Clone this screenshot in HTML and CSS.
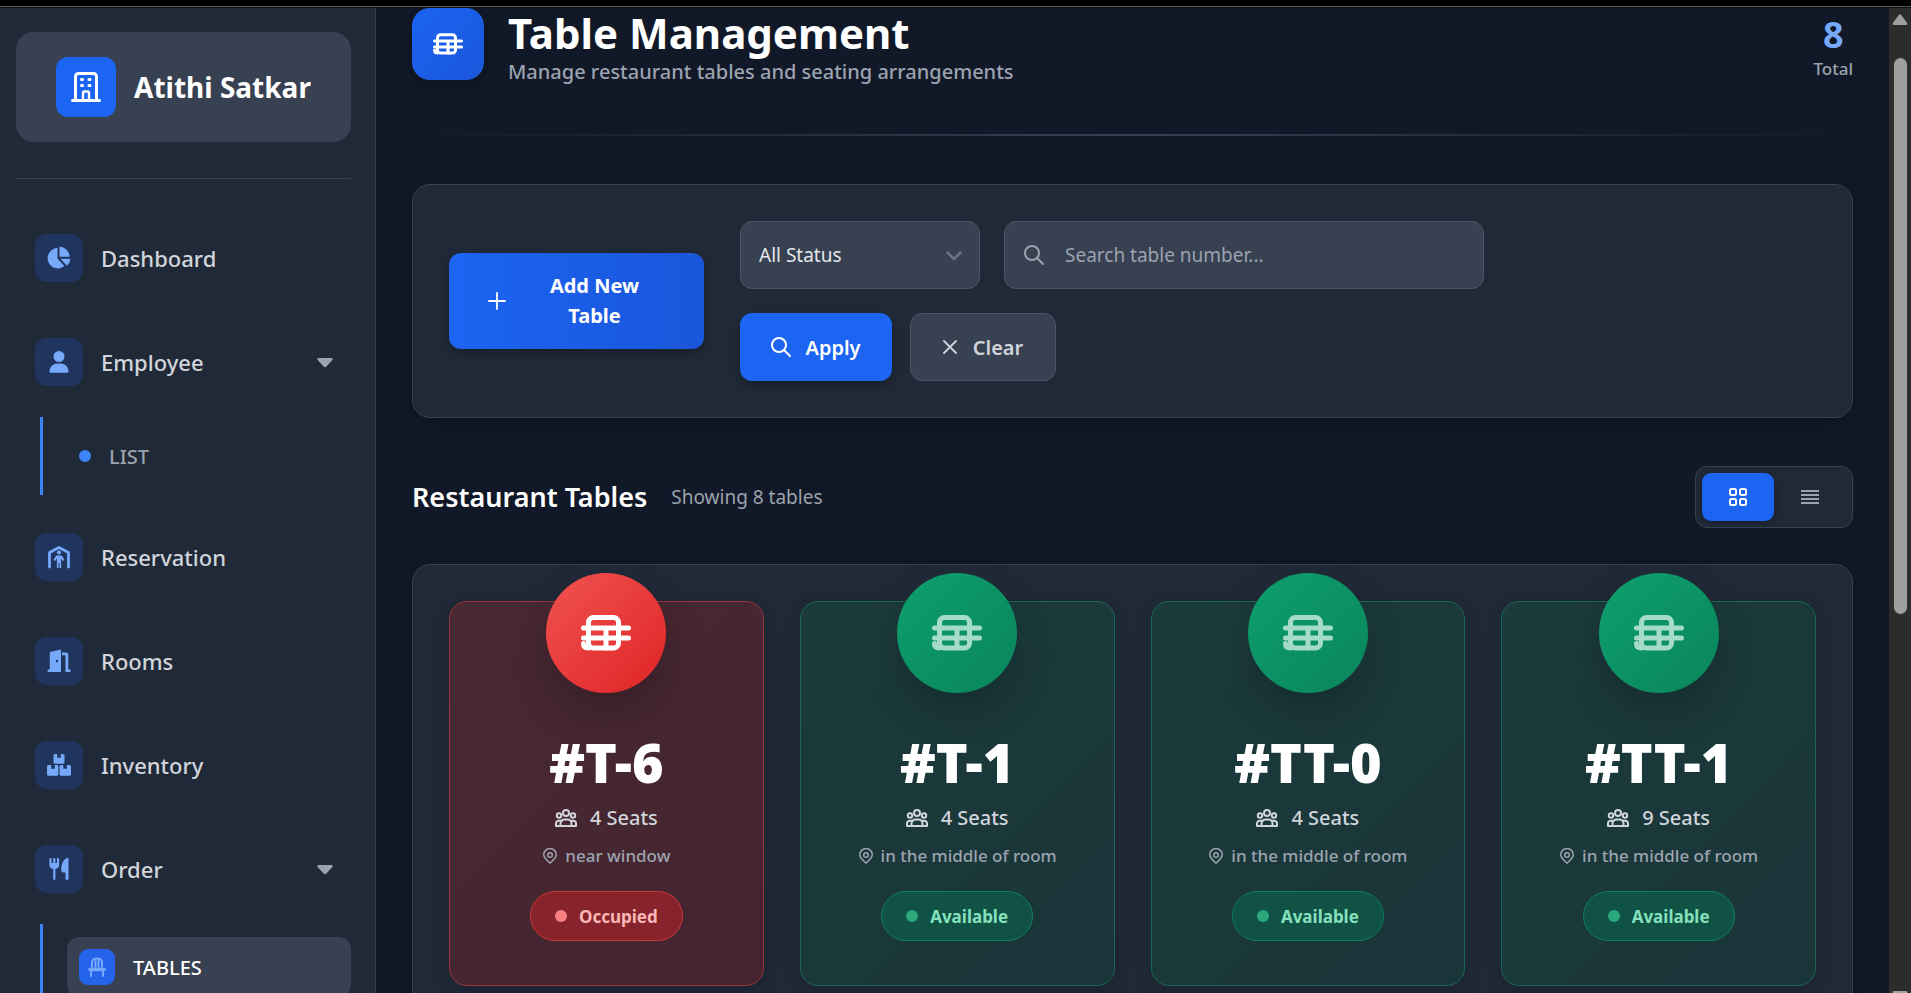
FILE: index.html
```html
<!DOCTYPE html>
<html lang="en">
<head>
<meta charset="utf-8">
<title>Table Management - Atithi Satkar</title>
<link rel="stylesheet" href="styles.css">
</head>
<body>
<svg class="sprite" aria-hidden="true">
  <symbol id="i-table" viewBox="0 0 50 50"><g fill="none" stroke="currentColor" stroke-width="5" stroke-linecap="round" stroke-linejoin="round"><rect x="7.500" y="9.500" width="30" height="30.500" rx="5"/><path d="M2.500 20h45M2.500 30h45M25 20v20M2.500 35.500q0 4.500 5 4.500"/></g></symbol>
  <symbol id="i-people" viewBox="0 0 22 20"><g fill="none" stroke="currentColor" stroke-width="2" stroke-linejoin="round"><circle cx="11" cy="5" r="3"/><circle cx="4" cy="7.500" r="2.200"/><circle cx="18" cy="7.500" r="2.200"/><path d="M5.500 18v-2.500a4 4 0 0 1 4-4h3a4 4 0 0 1 4 4V18zM5.500 18H1v-2.600a2.700 2.700 0 0 1 2.700-2.700h2.500M16.500 18H21v-2.600a2.700 2.700 0 0 0-2.700-2.700h-2.500"/></g></symbol>
  <symbol id="i-pin" viewBox="0 0 16 16"><g fill="none" stroke="currentColor" stroke-width="1.500"><path d="M8 15.200C5 12.500 1.700 9.700 1.700 6.800a6.300 6.300 0 0 1 12.600 0c0 2.900-3.300 5.700-6.300 8.400z"/><circle cx="8" cy="7" r="2.300"/></g></symbol>
  <symbol id="i-search" viewBox="0 0 20 20"><g fill="none" stroke="currentColor" stroke-width="2" stroke-linecap="round"><circle cx="8" cy="8" r="7"/><path d="M13 13l6 6"/></g></symbol>
  <symbol id="i-caret" viewBox="0 -2 16 12"><path fill="currentColor" d="M1.500 0h13q2 .6.900 2L9.400 8.500q-1.400 1.400-2.800 0L.6 2Q-.4.600 1.500 0z"/></symbol>
</svg>
<div class="window-edge"></div>
<div class="app">
  <aside class="sidebar">
    <a class="brand" href="#">
      <span class="brand-icon"><svg width="30" height="30" viewBox="0 0 30 30" fill="none" stroke="#fff" stroke-width="3" stroke-linecap="round"><path d="M1.500 28.500h27M4.500 28V4.500a3 3 0 0 1 3-3h15a3 3 0 0 1 3 3V28"/><path d="M12 28v-7a1.500 1.500 0 0 1 1.500-1.500h3A1.500 1.500 0 0 1 18 21v7" stroke-width="2.400"/><path d="M10.500 7.500h1M18 7.500h1M10.500 13.500h1M18 13.500h1"/></svg></span>
      <span class="brand-name">Atithi Satkar</span>
    </a>
    <nav>
      <ul class="menu">
        <li><a class="menu-item" href="#"><span class="menu-icon"><svg width="24" height="24" viewBox="0 0 24 24" fill="currentColor"><path d="M10.500 2v10.500l6.800 7.600A10.200 10.200 0 1 1 10.500 2z"/><path d="M12.500.8a10 10 0 0 1 10 10h-10zM13.500 12.800h10a11 11 0 0 1-3.600 7z"/></svg></span>Dashboard</a></li>
        <li><button class="menu-item" type="button"><span class="menu-icon"><svg width="24" height="24" viewBox="0 0 24 24" fill="currentColor"><circle cx="12" cy="6.500" r="5.500"/><path d="M2.500 21.500c0-4.800 3.800-8 8-8h3c4.200 0 8 3.200 8 8q0 1.200-1.200 1.200H3.700q-1.200 0-1.200-1.200z"/></svg></span>Employee<svg class="caret" width="16" height="12"><use href="#i-caret"/></svg></button>
          <ul class="submenu"><li><a class="sub-item" href="#"><span class="bullet"></span>LIST</a></li></ul></li>
        <li><a class="menu-item" href="#"><span class="menu-icon"><svg width="24" height="24" viewBox="0 0 24 24" fill="currentColor"><path d="M2.500 22V7.500L12 2.500l9.500 5V22" fill="none" stroke="currentColor" stroke-width="2.800" stroke-linejoin="round" stroke-linecap="round"/><circle cx="12" cy="7.500" r="2.100"/><path d="M10 10.500h4q1.500 0 3.300 4.600l-1.400.9-1.800-2.400V23h-1.600v-5h-1v5H9.900v-9.400L8.100 16l-1.400-.9q1.800-4.600 3.300-4.600z"/></svg></span>Reservation</a></li>
        <li><a class="menu-item" href="#"><span class="menu-icon"><svg width="24" height="24" viewBox="0 0 24 24" fill="currentColor"><path d="M2.800 20.500V4.200q0-1.200 1.200-1.500l8.300-1.900q1.700-.3 1.700 1.300V23H1q-1.200-1.200 0-2.500z"/><circle cx="10" cy="12" r="1.200" fill="#20355d"/><path d="M15 3.500h4q2.300 0 2.300 2.300v14.700H23q1.500 1.300 0 2.500h-4.500V6.200H15z"/></svg></span>Rooms</a></li>
        <li><a class="menu-item" href="#"><span class="menu-icon"><svg width="24" height="24" viewBox="0 0 24 24" fill="currentColor"><path d="M8 1h2.200v4q1.800-1 3.600 0V1H16q1.500 0 1.500 1.500v6.700q0 1.500-1.500 1.500H8q-1.500 0-1.500-1.500V2.500Q6.500 1 8 1zM1.500 12h2.700v4q1.800-1 3.600 0v-4h2.300q1.300 0 1.300 1.500v7.700q0 1.500-1.500 1.500H1.500Q0 22.700 0 21.200v-7.700Q0 12 1.500 12zM14 12h2.300v4q1.800-1 3.600 0v-4h2.600q1.500 0 1.500 1.500v7.700q0 1.500-1.500 1.500h-8.400q-1.500 0-1.500-1.500v-7.700Q12.600 12 14 12z"/></svg></span>Inventory</a></li>
        <li><button class="menu-item" type="button"><span class="menu-icon"><svg width="24" height="24" viewBox="0 0 24 24"><path d="M3.500 2v6q0 3 3.800 3T11 8V2M7.300 2v20" fill="none" stroke="currentColor" stroke-width="2.200" stroke-linecap="round"/><path fill="currentColor" d="M4 6h6.500v3l-1 2H5l-1-2zM21.500 1.500V22q-1.500 1.800-3 0v-6.500h-2q-2.300 0-2.300-2.500C14.200 7 16 3 19.500 1.200q2-.8 2 .3z"/></svg></span>Order<svg class="caret" width="16" height="12"><use href="#i-caret"/></svg></button>
          <ul class="submenu"><li><a class="sub-item current" href="#"><span class="sub-icon"><svg width="18" height="20" viewBox="0 0 18 20" fill="none" stroke="#76a9fa" stroke-width="2" stroke-linecap="round"><path d="M4 10V5.500Q4 1.500 9 1.500t5 4V10M7.500 2.500V10M10.500 2.500V10M3 19v-5M15 19v-5"/><path d="M2 12.500h14" stroke-width="3.500"/></svg></span>TABLES</a></li></ul></li>
      </ul>
    </nav>
  </aside>
  <main class="main">
    <header class="page-head">
      <span class="page-icon"><svg width="30" height="30"><use href="#i-table"/></svg></span>
      <div class="page-title"><h1>Table Management</h1><p>Manage restaurant tables and seating arrangements</p></div>
      <div class="total"><strong>8</strong><span>Total</span></div>
    </header>
    <section class="panel filters">
      <button class="btn add" type="button"><svg width="18" height="18" viewBox="0 0 18 18" stroke="currentColor" stroke-width="1.800" stroke-linecap="round"><path d="M9 1v16M1 9h16"/></svg><span>Add New Table</span></button>
      <form class="filter-form">
        <div class="select-wrap"><select class="field" aria-label="Status"><option>All Status</option></select><svg class="chevron" width="16" height="10" viewBox="0 0 16 10" fill="none" stroke="#6b7280" stroke-width="2.500" stroke-linecap="round" stroke-linejoin="round"><path d="M1.500 1.500L8 8l6.500-6.500"/></svg></div>
        <div class="search-wrap"><svg class="search-icon" width="20" height="20"><use href="#i-search"/></svg><input class="field" type="text" aria-label="Search table number" placeholder="Search table number..."></div>
        <div class="actions">
          <button class="btn apply" type="button"><svg width="20" height="20"><use href="#i-search"/></svg>Apply</button>
          <button class="btn clear" type="button"><svg width="14" height="14" viewBox="0 0 14 14" stroke="currentColor" stroke-width="1.800" stroke-linecap="round"><path d="M1 1l12 12M13 1L1 13"/></svg>Clear</button>
        </div>
      </form>
    </section>
    <div class="list-head">
      <h2>Restaurant Tables</h2><span class="count">Showing 8 tables</span>
      <div class="view-toggle">
        <button class="view on" type="button" aria-label="Grid view"><svg width="18" height="18" viewBox="0 0 18 18" fill="none" stroke="currentColor" stroke-width="2"><rect x="1" y="1" width="6" height="6" rx="1.500"/><rect x="11" y="1" width="6" height="6" rx="1.500"/><rect x="1" y="11" width="6" height="6" rx="1.500"/><rect x="11" y="11" width="6" height="6" rx="1.500"/></svg></button>
        <button class="view" type="button" aria-label="List view"><svg width="18" height="14" viewBox="0 0 18 14" stroke="currentColor" stroke-width="2"><path d="M0 1h18M0 5h18M0 9h18M0 13h18"/></svg></button>
      </div>
    </div>
    <section class="panel cards">
      <article class="card busy"><span class="medal"><svg width="50" height="50"><use href="#i-table"/></svg></span><h3>#T-6</h3><p class="seats"><svg width="22" height="20"><use href="#i-people"/></svg>4 Seats</p><p class="place"><svg width="16" height="16"><use href="#i-pin"/></svg>near window</p><span class="badge">Occupied</span></article>
      <article class="card"><span class="medal"><svg width="50" height="50"><use href="#i-table"/></svg></span><h3>#T-1</h3><p class="seats"><svg width="22" height="20"><use href="#i-people"/></svg>4 Seats</p><p class="place"><svg width="16" height="16"><use href="#i-pin"/></svg>in the middle of room</p><span class="badge">Available</span></article>
      <article class="card"><span class="medal"><svg width="50" height="50"><use href="#i-table"/></svg></span><h3>#TT-0</h3><p class="seats"><svg width="22" height="20"><use href="#i-people"/></svg>4 Seats</p><p class="place"><svg width="16" height="16"><use href="#i-pin"/></svg>in the middle of room</p><span class="badge">Available</span></article>
      <article class="card"><span class="medal"><svg width="50" height="50"><use href="#i-table"/></svg></span><h3>#TT-1</h3><p class="seats"><svg width="22" height="20"><use href="#i-people"/></svg>9 Seats</p><p class="place"><svg width="16" height="16"><use href="#i-pin"/></svg>in the middle of room</p><span class="badge">Available</span></article>
    </section>
  </main>
  <div class="scrollbar" aria-hidden="true"><svg width="16" height="12" viewBox="0 0 16 12"><path fill="#9f9f9f" d="M6.800 1q1.200-1.400 2.400 0l6 8q.8 2-1 2H1.800q-1.800 0-1-2z"/></svg><span class="thumb"></span><svg class="down" width="16" height="12" viewBox="0 0 16 12"><path fill="#9f9f9f" d="M6.800 11q1.200 1.400 2.400 0l6-8q.8-2-1-2H1.800q-1.800 0-1 2z"/></svg></div>
</div>
</body>
</html>
```
FILE: styles.css
```css
* { box-sizing: border-box; }
html, body { height: 100%; }
body {
  margin: 0;
  display: flex;
  flex-direction: column;
  overflow: hidden;
  background: #111827;
  color: #fff;
  font-family: "Segoe UI", "Noto Sans", "Open Sans", sans-serif;
  font-size: 19px;
}
h1, h2, h3, p, ul { margin: 0; padding: 0; }
ul { list-style: none; }
a { color: inherit; text-decoration: none; }
button, input, select { font: inherit; color: inherit; }
button { cursor: pointer; border: 0; }
svg { flex: none; display: block; }
.sprite { position: absolute; width: 0; height: 0; }

.window-edge { flex: none; height: 8px; background: #000; border-bottom: 1px solid #0b0e14; box-shadow: inset 0 -1px #555; }
.app { flex: 1; min-height: 0; display: flex; }

/* Sidebar */
.sidebar { flex: none; width: 376px; padding: 24px 24px 0 16px; overflow: hidden; background: #202937; border-right: 1px solid #374151; }
.brand { display: flex; align-items: center; gap: 18px; height: 110px; padding: 0 40px; border-radius: 18px; background: #374151; }
.brand-icon { display: grid; place-items: center; width: 60px; height: 60px; border-radius: 12px; background: #1c64f2; }
.brand-name { font-size: 28px; font-weight: 700; white-space: nowrap; }
nav { margin-top: 36px; padding-top: 37px; border-top: 1px solid #374151; }
.menu { display: flex; flex-direction: column; gap: 20px; }
.menu-item { display: flex; align-items: center; gap: 18px; width: 100%; height: 84px; padding: 0 18px 0 19px; background: none; text-align: left; color: #d1d5db; font-size: 22px; font-weight: 500; }
.menu-icon { display: grid; place-items: center; width: 48px; height: 48px; border-radius: 12px; background: #20355d; color: #76a9fa; }
.caret { margin-left: auto; color: #9ca3af; }
.submenu { margin: 13px 0 0 24px; padding: 13px 0 13px 24px; border-left: 3px solid #3f83f8; }
.sub-item { display: flex; align-items: center; gap: 18px; height: 52px; padding: 0 12px; border-radius: 12px; color: #9ca3af; font-size: 20px; font-weight: 500; }
.sub-item.current { height: 60px; background: #374151; color: #fff; }
.bullet { width: 12px; height: 12px; border-radius: 50%; background: #3f83f8; }
.sub-icon { display: grid; place-items: center; width: 36px; height: 36px; border-radius: 9px; background: #2563eb; }

/* Main column */
.main { flex: 1; min-width: 0; padding: 0 36px; overflow: hidden; background: #111827; }
.page-head { display: flex; gap: 24px; height: 128px; border-bottom: 2px solid; border-image: linear-gradient(90deg, transparent, #374151, transparent) 1; }
.page-icon { display: grid; place-items: center; flex: none; width: 72px; height: 72px; border-radius: 18px; background: linear-gradient(135deg, #1c64f2, #1a56db); box-shadow: 0 6px 18px rgba(0, 0, 0, .25); }
h1 { font-size: 42px; line-height: 50px; font-weight: 700; }
.page-title p { color: #9ca3af; font-size: 20px; line-height: 28px; font-weight: 500; }
.total { margin-left: auto; text-align: center; color: #9ca3af; font-size: 17px; line-height: 26px; font-weight: 500; }
.total strong { display: block; padding-top: 6px; color: #76a9fa; font-size: 36px; line-height: 42px; font-weight: 700; }

.panel { border: 1px solid #374151; border-radius: 18px; background: #202937; box-shadow: 0 6px 18px rgba(0, 0, 0, .2); }
.filters { display: flex; align-items: center; gap: 36px; margin-top: 48px; padding: 36px; }
.btn { display: flex; align-items: center; justify-content: center; height: 68px; border-radius: 12px; font-size: 20px; font-weight: 600; }
.btn.add { flex: none; width: 255px; height: 96px; padding: 0 33px 0 39px; justify-content: flex-start; background: linear-gradient(90deg, #1c64f2, #1a56db); line-height: 30px; font-weight: 700; box-shadow: 0 4px 10px rgba(0, 0, 0, .25); }
.btn.add span { flex: 1; padding: 0 12px 0 24px; }
.filter-form { flex: 1; display: flex; flex-wrap: wrap; gap: 24px; }
.select-wrap, .search-wrap { position: relative; height: 68px; }
.select-wrap { width: 240px; }
.search-wrap { width: 480px; }
.field { appearance: none; width: 100%; height: 100%; border: 1px solid #4b5563; border-radius: 12px; background: #374151; color: #e5e7eb; outline: 0; }
.select-wrap .field { padding: 0 18px; }
.search-wrap .field { padding: 0 18px 0 60px; }
.field::placeholder { color: #9ca3af; opacity: 1; }
.chevron { position: absolute; right: 18px; top: 30px; }
.search-icon { position: absolute; left: 20px; top: 24px; color: #9ca3af; }
.actions { flex-basis: 100%; display: flex; gap: 18px; }
.btn.apply { gap: 14px; width: 152px; background: #1c64f2; box-shadow: 0 4px 10px rgba(0, 0, 0, .25); }
.btn.clear { gap: 16px; width: 146px; background: #374151; border: 1px solid #4b5563; color: #d1d5db; }

.list-head { display: flex; align-items: center; gap: 24px; margin: 48px 0 36px; }
h2 { font-size: 27px; line-height: 40px; font-weight: 600; }
.count { color: #9ca3af; }
.view-toggle { display: flex; margin-left: auto; padding: 6px; width: 158px; border: 1px solid #374151; border-radius: 12px; background: #202937; }
.view { display: grid; place-items: center; width: 72px; height: 48px; border-radius: 9px; background: none; color: #9ca3af; }
.view.on { background: #1c64f2; color: #fff; box-shadow: 0 2px 6px rgba(0, 0, 0, .25); }

/* Table cards */
.cards { display: grid; grid-template-columns: repeat(4, 1fr); gap: 36px; padding: 36px; }
.card { position: relative; display: flex; flex-direction: column; align-items: center; height: 385px; padding-top: 128px; border: 1px solid #18694f; border-radius: 18px; background: linear-gradient(135deg, #1b3a3c, #1a3539); box-shadow: 0 6px 18px rgba(0, 0, 0, .15); }
.card.busy { border-color: #9b353c; background: linear-gradient(135deg, #482832, #44242e); }
.medal { position: absolute; top: -29px; left: 50%; margin-left: -60px; display: grid; place-items: center; width: 120px; height: 120px; border-radius: 50%; background: linear-gradient(135deg, #0e9f6e, #09855b); color: #a4dcc8; box-shadow: 0 20px 40px rgba(0, 0, 0, .2); }
.busy .medal { background: linear-gradient(135deg, #f05252, #e02424); color: #fff; }
h3 { font-size: 54px; line-height: 64px; font-weight: 900; }
.seats, .place { display: flex; align-items: center; }
.seats { gap: 13px; margin-top: 8px; color: #d1d5db; font-size: 20px; line-height: 32px; font-weight: 500; }
.place { gap: 7px; margin-top: 8px; color: #9ca3af; font-size: 17px; line-height: 28px; font-weight: 500; }
.badge { display: flex; align-items: center; gap: 12px; height: 50px; margin-top: 21px; padding: 0 24px; border: 1px solid #0f7f5c; border-radius: 25px; background: #115246; color: #84e1bc; font-size: 17px; font-weight: 700; }
.badge::before { content: ""; width: 12px; height: 12px; border-radius: 50%; background: #2aa87c; }
.busy .badge { border-color: #c8373c; background: #87242b; color: #fbb6b6; }
.busy .badge::before { background: #f98080; }

/* Scroll track */
.scrollbar { flex: none; display: flex; flex-direction: column; align-items: center; width: 22px; padding-top: 6px; overflow: hidden; background: #2c2c2c; }
.thumb { flex: none; width: 13px; height: 556px; margin-top: 32px; border-radius: 7px; background: #9f9f9f; }
.down { margin: auto 0 -9px; }
```
